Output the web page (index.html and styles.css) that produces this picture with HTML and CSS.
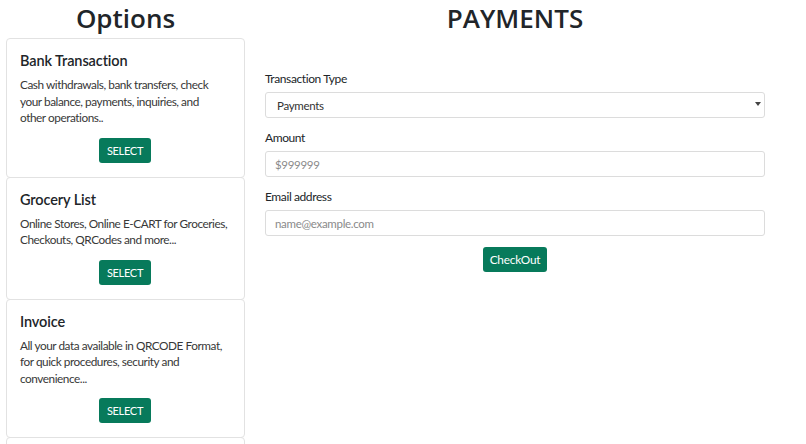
FILE: index.html
```html
<!DOCTYPE html>
<html lang="en">
<head>
    <meta charset="UTF-8">
    <meta name="viewport" content="width=device-width, initial-scale=1.0">
    <title>Payments</title>
    <link rel="stylesheet" href="styles.css">
</head>
<body>
    <div class="page">
        <div class="options">
            <h1>Options</h1>
            <div class="card">
                <h2>Bank Transaction</h2>
                <p>Cash withdrawals, bank transfers, check your balance, payments, inquiries, and <span class="nowrap">other operations..</span></p>
                <button class="btn">SELECT</button>
            </div>
            <div class="card">
                <h2>Grocery List</h2>
                <p>Online Stores, Online E-CART for Groceries, Checkouts, QRCodes and more...</p>
                <button class="btn">SELECT</button>
            </div>
            <div class="card">
                <h2>Invoice</h2>
                <p>All your data available in QRCODE Format, for quick procedures, security and convenience...</p>
                <button class="btn">SELECT</button>
            </div>
            <div class="card card-next"></div>
        </div>
        <div class="payments">
            <h1>PAYMENTS</h1>
            <form class="pay-form">
                <label for="type">Transaction Type</label>
                <div class="select-wrap">
                    <select id="type">
                        <option>Payments</option>
                        <option>Transfers</option>
                    </select>
                </div>
                <label for="amount">Amount</label>
                <input type="text" id="amount" placeholder="$999999">
                <label for="email">Email address</label>
                <input type="email" id="email" placeholder="name@example.com">
                <div class="actions">
                    <button type="button" class="btn">CheckOut</button>
                </div>
            </form>
        </div>
    </div>
</body>
</html>
```

FILE: styles.css
```css
body {
    margin: 0;
    font-family: Lato, 'Open Sans', sans-serif;
    color: #212529;
    background: #fff;
    overflow: hidden;
}

.page {
    display: flex;
    height: 444px;
    overflow: hidden;
}

h1 {
    margin: 0;
    height: 38px;
    font-family: 'Open Sans', sans-serif;
    font-size: 26px;
    font-weight: 600;
    line-height: 36px;
    text-align: center;
}

.options {
    width: 239px;
    margin-left: 6px;
}

.card {
    border: 1px solid #e2e2e2;
    border-radius: 4px;
    padding: 12px 14px 14px 13px;
    text-align: center;
    margin-bottom: -1px;
}

.card-next {
    height: 40px;
}

.card h2 {
    margin: 0 0 6px;
    font-size: 14.5px;
    font-weight: 600;
    line-height: 20px;
    letter-spacing: -0.1px;
    text-align: left;
}

.card p {
    margin: 0 0 11px;
    font-size: 11.8px;
    line-height: 16.5px;
    letter-spacing: -0.45px;
    color: #383838;
    text-align: left;
}

.nowrap {
    white-space: nowrap;
}

.btn {
    background: #077a5b;
    color: #fff;
    border: none;
    border-radius: 3px;
    height: 25px;
    padding: 0 7.5px;
    font-family: inherit;
    font-size: 11px;
    letter-spacing: -0.3px;
    cursor: pointer;
}

.payments {
    width: 500px;
    margin-left: 20px;
}

.pay-form {
    margin-top: 33px;
    display: flex;
    flex-direction: column;
}

.pay-form label {
    font-size: 12px;
    line-height: 16px;
    letter-spacing: -0.4px;
    margin-bottom: 5px;
}

.pay-form input,
.pay-form select {
    box-sizing: border-box;
    width: 100%;
    height: 26px;
    border: 1px solid #dcdcdc;
    border-radius: 3px;
    padding: 0 9px;
    font-family: inherit;
    font-size: 11.5px;
    letter-spacing: -0.3px;
    color: #333;
    background: #fff;
    margin-bottom: 12px;
}

.pay-form input::placeholder {
    color: #8a8a8a;
}

.select-wrap {
    position: relative;
}

.pay-form select {
    appearance: none;
    padding-left: 11px;
}

.select-wrap::after {
    content: '';
    position: absolute;
    right: 4px;
    top: 10px;
    border-left: 3px solid transparent;
    border-right: 3px solid transparent;
    border-top: 4px solid #444;
}

.actions {
    text-align: center;
    margin-top: -1px;
}

.actions .btn {
    font-size: 11.8px;
    letter-spacing: -0.2px;
    padding: 0 7px;
}
```
